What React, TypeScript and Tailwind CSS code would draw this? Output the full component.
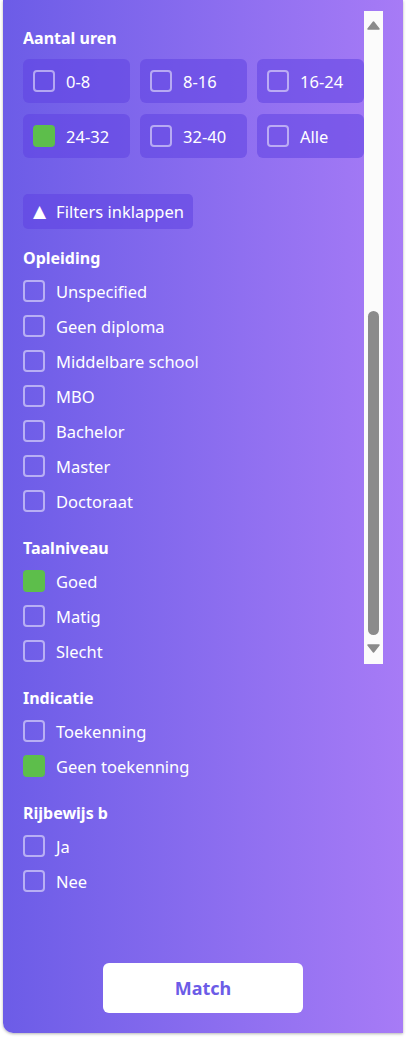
import React from "react";

const font = { fontFamily: '"Noto Sans", "DejaVu Sans", sans-serif' };

function Box({ checked }: { checked?: boolean }) {
  return checked ? (
    <span className="block w-[22px] h-[22px] rounded-[4px] bg-[#5dbe4b] shrink-0" />
  ) : (
    <span className="block w-[22px] h-[22px] rounded-[4px] border-2 border-white/50 shrink-0" />
  );
}

function Section({ title, items, checked = [], className = "" }: { title: string; items: string[]; checked?: string[]; className?: string }) {
  return (
    <div className={className}>
      <div className="h-6 leading-6 text-[16px] font-bold text-white mb-[10px]">{title}</div>
      <div className="flex flex-col gap-[13px]">
        {items.map((it) => (
          <div key={it} className="flex items-center h-[22px] gap-[11px]">
            <Box checked={checked.includes(it)} />
            <span className="relative top-[1px] text-[16.5px] text-white leading-6">{it}</span>
          </div>
        ))}
      </div>
    </div>
  );
}

function Arrow({ up }: { up?: boolean }) {
  return (
    <svg width="13" height="9" viewBox="0 0 13 9" className={up ? "" : "rotate-180"}>
      <path d="M6.5 1 L12 8 L1 8 Z" fill="#8b8b8b" stroke="#8b8b8b" strokeWidth="1.5" strokeLinejoin="round" />
    </svg>
  );
}

export default function App() {
  const hours = ["0-8", "8-16", "16-24", "24-32", "32-40", "Alle"];
  return (
    <div className="w-[408px] h-[1038px] bg-white" style={font}>
      <div className="ml-[3px] w-[400px] h-[1033px] rounded-bl-[10px] bg-gradient-to-r from-[#6c5ce7] to-[#a77bf6] shadow-[0_1px_3px_rgba(0,0,0,0.3)] flex flex-col pt-[11px] pl-5 pb-5">
        <div className="flex h-[653px]">
          <div className="w-[341px] overflow-hidden pt-[13px]">
            <div className="h-6 leading-6 pt-[2px] text-[16px] font-bold text-white mb-[11px]">Aantal uren</div>
            <div className="grid grid-cols-3 gap-x-[10px] gap-y-[11px]">
              {hours.map((h) => (
                <div key={h} className="h-[44px] rounded-[6px] bg-[rgba(95,66,225,0.55)] flex items-center pl-[10px] gap-[11px]">
                  <Box checked={h === "24-32"} />
                  <span className="relative top-[1px] text-[16.5px] text-white">{h}</span>
                </div>
              ))}
            </div>
            <div className="mt-[36px] inline-flex items-center h-[35px] rounded-[5px] bg-[rgba(95,66,225,0.55)] pl-[10px] pr-[9px] gap-[10px] text-white text-[16.5px]">
              <span className="text-[17px]" style={{ fontFamily: '"DejaVu Sans", sans-serif' }}>▲</span>
              <span className="relative top-[1px]">Filters inklappen</span>
            </div>
            <Section
              className="mt-[17px]"
              title="Opleiding"
              items={["Unspecified", "Geen diploma", "Middelbare school", "MBO", "Bachelor", "Master", "Doctoraat"]}
            />
            <Section className="mt-6" title="Taalniveau" items={["Goed", "Matig", "Slecht"]} checked={["Goed"]} />
          </div>
          <div className="w-[19px] bg-[#fbfbfb] flex flex-col items-center">
            <div className="h-[20px] flex items-end justify-center pb-[1px]">
              <Arrow up />
            </div>
            <div className="flex-1 w-full relative">
              <div className="absolute left-[4px] w-[11px] top-[280px] bottom-[9px] rounded-full bg-[#8b8b8b]" />
            </div>
            <div className="h-[20px] flex items-start justify-center">
              <Arrow />
            </div>
          </div>
        </div>
        <Section className="mt-[22px]" title="Indicatie" items={["Toekenning", "Geen toekenning"]} checked={["Geen toekenning"]} />
        <Section className="mt-6" title="Rijbewijs b" items={["Ja", "Nee"]} />
        <div className="flex-1" />
        <div className="flex justify-center pr-5">
          <button className="w-[200px] h-[50px] rounded-[6px] bg-white text-[#6c5ce7] text-[18px] font-bold">Match</button>
        </div>
      </div>
    </div>
  );
}
